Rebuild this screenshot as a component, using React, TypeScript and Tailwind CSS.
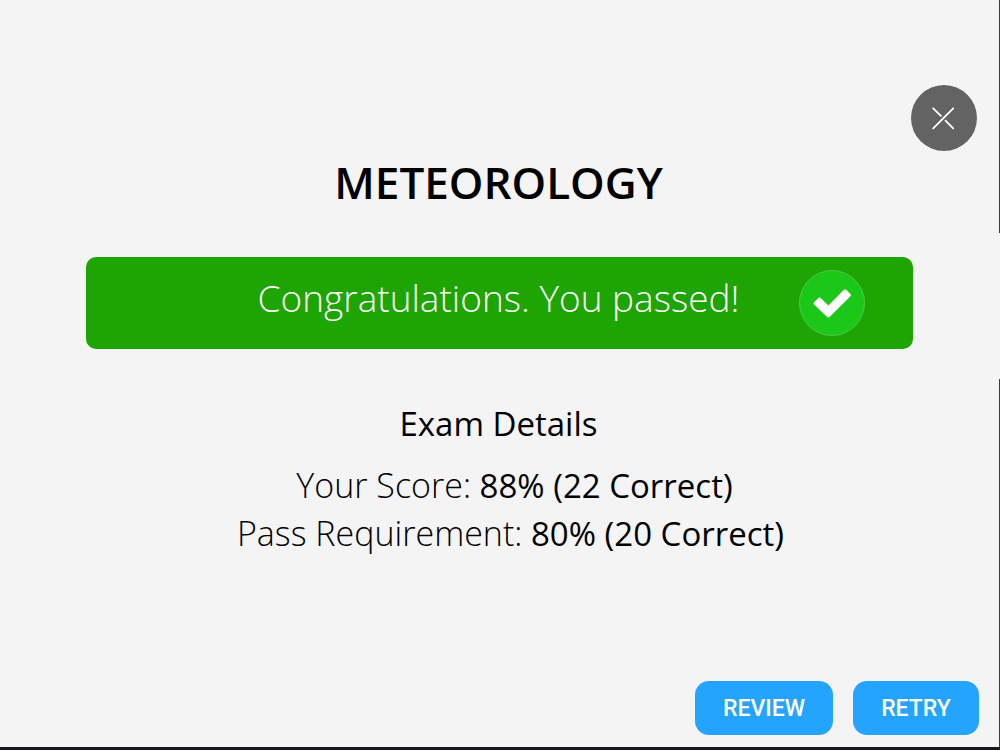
const details = [
  { label: 'Your Score:', value: '88% (22 Correct)', indent: 'pl-[30px]' },
  { label: 'Pass Requirement:', value: '80% (20 Correct)', indent: 'pl-[22px]' },
];

const actions = [
  { label: 'REVIEW', width: 'w-[138px]' },
  { label: 'RETRY', width: 'w-[126px]' },
];

function CloseButton() {
  return (
    <button
      type="button"
      aria-label="Close"
      className="flex size-[66px] items-center justify-center rounded-full bg-[#636363] text-white"
    >
      <svg viewBox="0 0 24 24" className="size-6" fill="none" stroke="currentColor" strokeWidth="1.8" strokeLinecap="round">
        <path d="M1.2 22.3 21.2 2.3" />
        <path d="M1.2 2.3 8.9 9.8" />
        <path d="M13.5 14.6 21.2 22.3" />
      </svg>
    </button>
  );
}

function PassedBadge() {
  return (
    <span className="flex size-[66px] shrink-0 items-center justify-center rounded-full border border-[#4bc84b] bg-[#1bc818]">
      <svg viewBox="0 0 38 30" className="h-[30px] w-[38px]" fill="white">
        <path d="M1.3 14 5.1 10.2Q6.5 8.8 7.9 10.2L15.4 17.4 30.6 1.9Q32 .5 33.4 1.9L37.2 5.7Q38.4 7.1 37.2 8.5L16.8 28.8Q15.4 30.2 14 28.8L1.3 16.8Q-.1 15.4 1.3 14Z" />
      </svg>
    </span>
  );
}

export default function App() {
  return (
    <div className="flex min-h-screen flex-col border-b-3 border-[#18171c] bg-[#f4f4f4] font-['Open_Sans',sans-serif] text-black">
      <div className="flex grow">
        <main className="flex min-w-0 grow flex-col">
          <header className="flex justify-end pt-[85px] pr-[22px]">
            <CloseButton />
          </header>

          <h1 className="pr-0.5 text-center text-[44px] leading-[62px] font-semibold">METEOROLOGY</h1>

          {/* Result banner */}
          <section className="mx-[86px] mt-11 flex h-[92px] items-center rounded-[10px] bg-[#1ea403] pr-12">
            <p className="grow pb-2.5 pl-28 text-center text-[37px] font-light text-white">
              Congratulations. You passed!
            </p>
            <PassedBadge />
          </section>

          {/* Exam details */}
          <section className="mt-[51px] text-center text-[33px] leading-[48px]">
            <h2 className="pr-0.5">Exam Details</h2>
            <div className="mt-3.5">
              {details.map((item) => (
                <p key={item.label} className={item.indent}>
                  <span className="text-[34px] leading-none font-light">{item.label}</span> {item.value}
                </p>
              ))}
            </div>
          </section>

          <footer className="mt-auto flex justify-end gap-5 pr-5 pb-3">
            {actions.map((action) => (
              <button
                key={action.label}
                type="button"
                className={`${action.width} h-[54px] rounded-[14px] bg-[#25a4fe] pt-[3px] font-[Roboto,sans-serif] text-[23px] font-medium text-white`}
              >
                {action.label}
              </button>
            ))}
          </footer>
        </main>

        {/* Page edge, broken by the side tab */}
        <div className="flex w-px shrink-0 flex-col">
          <div className="h-[233px] bg-[#3b3b3d]" />
          <div className="h-[146px]" />
          <div className="grow bg-[#3b3b3d]" />
        </div>
      </div>
    </div>
  );
}
